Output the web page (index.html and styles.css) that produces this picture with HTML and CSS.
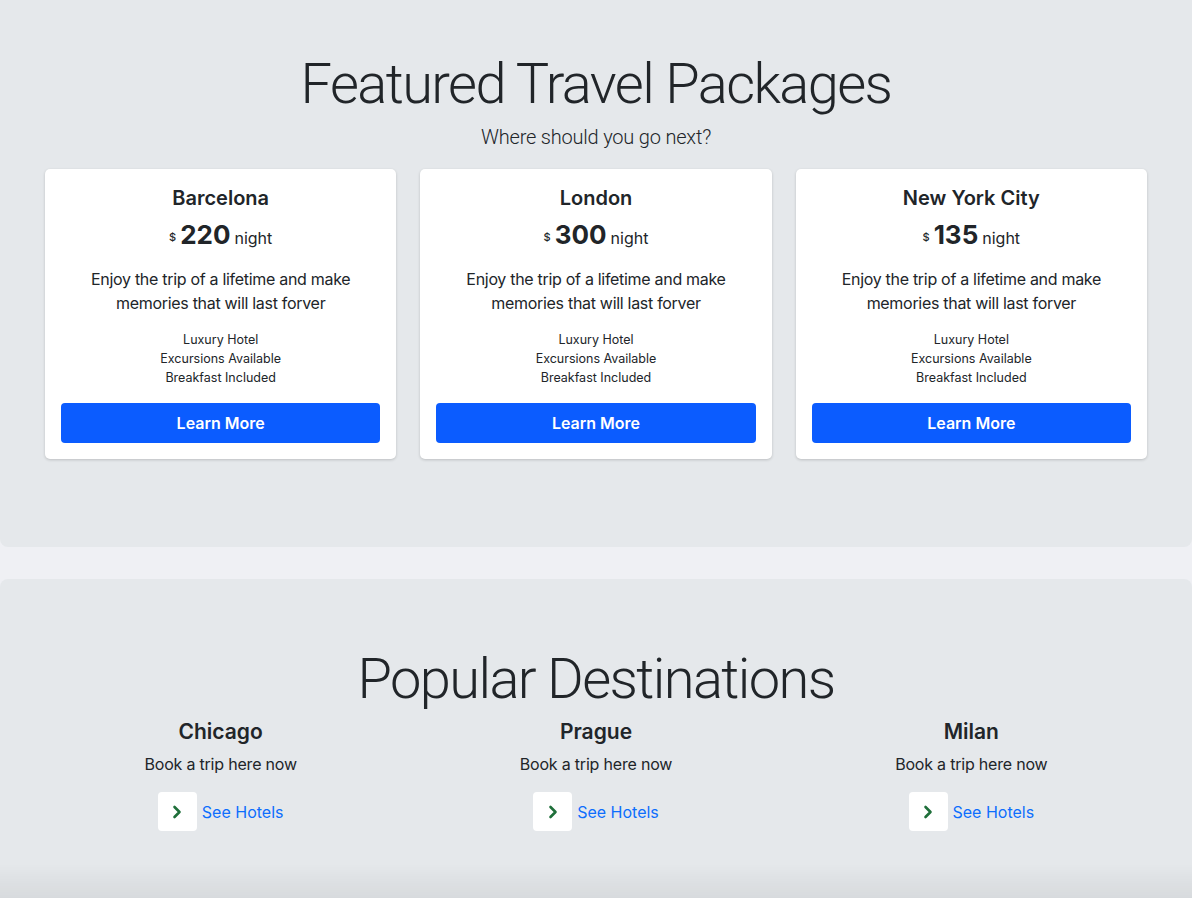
FILE: index.html
```html
<!DOCTYPE html>
<html lang="en">
<head>
<meta charset="utf-8">
<title>Travel</title>
<link rel="stylesheet" href="styles.css">
</head>
<body>
<section class="band band-first">
  <h1 class="display">Featured Travel Packages</h1>
  <p class="lead">Where should you go next?</p>
  <div class="grid">
    <div class="card">
      <h5 class="card-title">Barcelona</h5>
      <div class="price"><sup class="cur">$</sup><span class="amount">220</span><span class="unit">night</span></div>
      <p class="desc">Enjoy the trip of a lifetime and make memories that will last forver</p>
      <ul class="features"><li>Luxury Hotel</li><li>Excursions Available</li><li>Breakfast Included</li></ul>
      <a class="btn" href="#">Learn More</a>
    </div>
    <div class="card">
      <h5 class="card-title">London</h5>
      <div class="price"><sup class="cur">$</sup><span class="amount">300</span><span class="unit">night</span></div>
      <p class="desc">Enjoy the trip of a lifetime and make memories that will last forver</p>
      <ul class="features"><li>Luxury Hotel</li><li>Excursions Available</li><li>Breakfast Included</li></ul>
      <a class="btn" href="#">Learn More</a>
    </div>
    <div class="card">
      <h5 class="card-title">New York City</h5>
      <div class="price"><sup class="cur">$</sup><span class="amount">135</span><span class="unit">night</span></div>
      <p class="desc">Enjoy the trip of a lifetime and make memories that will last forver</p>
      <ul class="features"><li>Luxury Hotel</li><li>Excursions Available</li><li>Breakfast Included</li></ul>
      <a class="btn" href="#">Learn More</a>
    </div>
  </div>
</section>
<section class="band band-second">
  <h1 class="display">Popular Destinations</h1>
  <div class="grid">
    <div class="dest">
      <h4 class="dest-title">Chicago</h4>
      <p class="dest-text">Book a trip here now</p>
      <div class="dest-link"><span class="chev"><svg width="10" height="14" viewBox="0 0 10 14"><path d="M2.5 2 L7.5 7 L2.5 12" fill="none" stroke="#1f6f3a" stroke-width="2.6" stroke-linecap="round" stroke-linejoin="round"/></svg></span><a href="#">See Hotels</a></div>
    </div>
    <div class="dest">
      <h4 class="dest-title">Prague</h4>
      <p class="dest-text">Book a trip here now</p>
      <div class="dest-link"><span class="chev"><svg width="10" height="14" viewBox="0 0 10 14"><path d="M2.5 2 L7.5 7 L2.5 12" fill="none" stroke="#1f6f3a" stroke-width="2.6" stroke-linecap="round" stroke-linejoin="round"/></svg></span><a href="#">See Hotels</a></div>
    </div>
    <div class="dest">
      <h4 class="dest-title">Milan</h4>
      <p class="dest-text">Book a trip here now</p>
      <div class="dest-link"><span class="chev"><svg width="10" height="14" viewBox="0 0 10 14"><path d="M2.5 2 L7.5 7 L2.5 12" fill="none" stroke="#1f6f3a" stroke-width="2.6" stroke-linecap="round" stroke-linejoin="round"/></svg></span><a href="#">See Hotels</a></div>
    </div>
  </div>
</section>
<div class="bottom-shade"></div>
</body>
</html>
```

FILE: styles.css
```css
* { box-sizing: border-box; }
html, body { margin: 0; padding: 0; }
body {
  background: #eff0f4;
  color: #212529;
  font-family: Inter, "Noto Sans", "Liberation Sans", sans-serif;
  font-size: 16px;
  line-height: 1.5;
  height: 898px;
  overflow: hidden;
}
.band {
  background: #e5e8eb;
  border-radius: 8px;
  text-align: center;
}
.band-first {
  border-radius: 0 0 8px 8px;
  padding: 51px 0 88px;
}
.band-second {
  margin-top: 32px;
  padding: 67px 0 80px;
}
.display {
  margin: 0;
  font-family: Roboto, Inter, "Liberation Sans", sans-serif;
  font-size: 56px;
  font-weight: 300;
  line-height: 67px;
  letter-spacing: -1.6px;
}
.lead {
  margin: 4px 0 17px;
  font-family: Roboto, Inter, "Liberation Sans", sans-serif;
  font-size: 20px;
  font-weight: 300;
  line-height: 30px;
  letter-spacing: -0.2px;
}
.grid {
  width: 1102px;
  margin: 0 auto;
  display: grid;
  grid-template-columns: repeat(3, 1fr);
  column-gap: 24px;
}
.card {
  background: #fff;
  border-radius: 5px;
  box-shadow: 0 1px 3px rgba(0,0,0,0.18);
  padding: 17px 16px 16px;
  display: flex;
  flex-direction: column;
}
.card-title {
  margin: 0 0 9px;
  font-size: 20px;
  font-weight: 600;
  line-height: 24px;
}
.price {
  margin: 0 0 14px;
  height: 34px;
  display: flex;
  justify-content: center;
  align-items: baseline;
  line-height: 32px;
}
.cur {
  font-size: 11px;
  font-weight: 500;
  margin-right: 4px;
  position: relative;
  top: -3px;
  vertical-align: baseline;
}
.amount {
  font-size: 26px;
  font-weight: 700;
  margin-right: 4px;
}
.unit {
  font-size: 16px;
}
.desc {
  margin: 0 0 15px;
  line-height: 24px;
  letter-spacing: -0.3px;
}
.features {
  list-style: none;
  margin: 0 0 16px;
  padding: 0;
  font-size: 12.5px;
  line-height: 19px;
}
.btn {
  display: block;
  height: 40px;
  line-height: 40px;
  background: #0b5cff;
  color: #fff;
  border-radius: 4px;
  text-decoration: none;
  font-weight: 600;
  font-size: 16px;
}
.dest-title {
  margin: 7px 0 8px;
  font-size: 21px;
  font-weight: 600;
  line-height: 24px;
}
.dest-text {
  margin: 0 0 16px;
  line-height: 24px;
  letter-spacing: -0.2px;
}
.dest-link {
  display: flex;
  justify-content: center;
  align-items: center;
  gap: 5px;
}
.chev {
  width: 39px;
  height: 39px;
  background: #fff;
  border-radius: 4px;
  display: flex;
  align-items: center;
  justify-content: center;
}
.chev svg { display: block; }
.dest-link a {
  color: #0d6efd;
  text-decoration: none;
  font-size: 16px;
}
.bottom-shade {
  position: fixed;
  left: 0;
  right: 0;
  bottom: 0;
  height: 34px;
  background: linear-gradient(to bottom, rgba(0,0,0,0), rgba(0,0,0,0.06));
  pointer-events: none;
}
```
